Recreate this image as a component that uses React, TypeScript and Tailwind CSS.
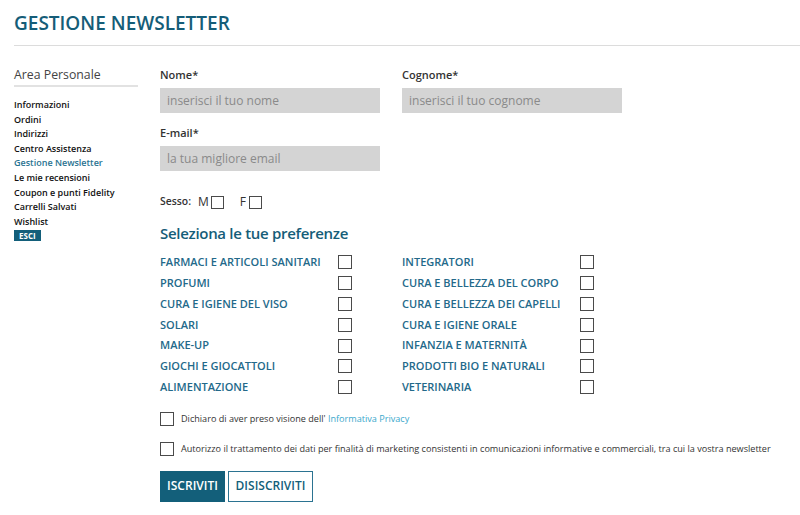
const menu = [
  "Informazioni",
  "Ordini",
  "Indirizzi",
  "Centro Assistenza",
  "Gestione Newsletter",
  "Le mie recensioni",
  "Coupon e punti Fidelity",
  "Carrelli Salvati",
  "Wishlist",
];

const left = [
  "FARMACI E ARTICOLI SANITARI",
  "PROFUMI",
  "CURA E IGIENE DEL VISO",
  "SOLARI",
  "MAKE-UP",
  "GIOCHI E GIOCATTOLI",
  "ALIMENTAZIONE",
];

const right = [
  "INTEGRATORI",
  "CURA E BELLEZZA DEL CORPO",
  "CURA E BELLEZZA DEI CAPELLI",
  "CURA E IGIENE ORALE",
  "INFANZIA E MATERNITÀ",
  "PRODOTTI BIO E NATURALI",
  "VETERINARIA",
];

function Box({ size = "w-[14px] h-[14px]" }: { size?: string }) {
  return <span className={`${size} border-[1.5px] border-[#4a4a4a] bg-white inline-block shrink-0`} />;
}

function Field({ label, placeholder }: { label: string; placeholder: string }) {
  return (
    <div className="w-[220px]">
      <div className="text-[11px] leading-4 text-[#333] font-semibold">{label}</div>
      <div className="mt-[5px] h-[25px] bg-[#d4d4d4] pl-[7px] flex items-center text-[12px] text-[#8a8a8a]">
        {placeholder}
      </div>
    </div>
  );
}

function PrefCol({ items }: { items: string[] }) {
  return (
    <div className="w-[242px]">
      {items.map((p) => (
        <div key={p} className="h-[20.8px] flex items-center">
          <span className="w-[178px] text-[11px] font-semibold text-[#23698a] whitespace-nowrap">{p}</span>
          <Box />
        </div>
      ))}
    </div>
  );
}

export default function App() {
  return (
    <div className="w-[800px] h-[515px] bg-white overflow-hidden font-['Open_Sans',sans-serif]">
      <div className="pt-[8px] pl-[14px]">
        <h1 className="text-[19px] leading-[30px] font-semibold text-[#155d78]">GESTIONE NEWSLETTER</h1>
      </div>
      <div className="ml-[14px] mt-[7px] h-px bg-[#dcdcdc]" />

      <div className="flex pl-[14px]">
        {/* Sidebar */}
        <div className="w-[124px] shrink-0 pt-[20px]">
          <div className="text-[12.3px] leading-[18px] text-[#444]">Area Personale</div>
          <div className="mt-[1px] h-[2px] bg-[#e2e2e2]" />
          <div className="mt-[11px]">
            {menu.map((m) => (
              <div
                key={m}
                className={`text-[9px] leading-[14.6px] font-semibold whitespace-nowrap ${
                  m === "Gestione Newsletter" ? "text-[#2a7391]" : "text-[#111]"
                }`}
              >
                {m}
              </div>
            ))}
          </div>
          <div className="mt-[1px] flex w-fit items-center h-[11px] bg-[#135f7a] text-white text-[8px] font-bold px-[5px]">
            ESCI
          </div>
        </div>

        {/* Main */}
        <div className="ml-[22px] pt-[21px]">
          <div className="flex gap-[22px]">
            <Field label="Nome*" placeholder="inserisci il tuo nome" />
            <Field label="Cognome*" placeholder="inserisci il tuo cognome" />
          </div>
          <div className="mt-[12px]">
            <Field label="E-mail*" placeholder="la tua migliore email" />
          </div>

          <div className="mt-[23px] h-4 flex items-center text-[#333]">
            <span className="text-[10.4px] font-semibold">Sesso:</span>
            <span className="ml-[7px] text-[12px]">M</span>
            <span className="ml-[2px] flex"><Box size="w-[13px] h-[13px]" /></span>
            <span className="ml-[16px] text-[12px]">F</span>
            <span className="ml-[3px] flex"><Box size="w-[13px] h-[13px]" /></span>
          </div>

          <h2 className="mt-[11px] text-[15px] leading-6 font-semibold tracking-[-0.3px] text-[#155d78]">
            Seleziona le tue preferenze
          </h2>

          <div className="mt-[7px] flex">
            <PrefCol items={left} />
            <PrefCol items={right} />
          </div>

          <div className="mt-[14px] flex items-center gap-[7px] text-[9.1px] text-[#333]">
            <Box />
            <span>
              Dichiaro di aver preso visione dell'{" "}
              <span className="text-[#3aa8cc]">Informativa Privacy</span>
            </span>
          </div>
          <div className="mt-[16px] flex items-center gap-[7px] text-[9.1px] text-[#333] whitespace-nowrap">
            <Box />
            <span>
              Autorizzo il trattamento dei dati per finalità di marketing consistenti in comunicazioni informative e
              commerciali, tra cui la vostra newsletter
            </span>
          </div>

          <div className="mt-[15px] flex gap-[3px]">
            <button className="h-[31px] w-[65px] bg-[#135f7a] text-white text-[12px] font-semibold">ISCRIVITI</button>
            <button className="h-[31px] w-[85px] border border-[#2b7391] text-[#135f7a] text-[12px] font-semibold">
              DISISCRIVITI
            </button>
          </div>
        </div>
      </div>
    </div>
  );
}
